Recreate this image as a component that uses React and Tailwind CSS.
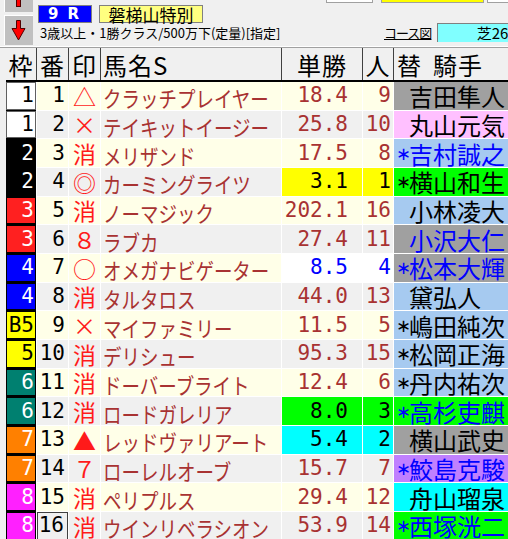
import React from "react";

const ROWBG = ["bg-[#ffffe8]", "bg-[#f0f0f0]"];
const RED = "text-[#a83232]";

const rows = [
  { wk: "1", wc: "bg-white text-black border-[#606060]", no: "1", mk: "△", nm: "クラッチプレイヤー", od: "18.4", pp: "9", ast: false, jk: "吉田隼人", jc: "bg-[#a0a0a0] text-black" },
  { wk: "1", wc: "bg-white text-black border-[#606060]", no: "2", mk: "×", nm: "テイキットイージー", od: "25.8", pp: "10", ast: false, jk: "丸山元気", jc: "bg-[#ffc0ff] text-black" },
  { wk: "2", wc: "bg-black text-white border-black", no: "3", mk: "消", nm: "メリザンド", od: "17.5", pp: "8", ast: true, jk: "吉村誠之", jc: "bg-[#a6caf0] text-[#0000ff]" },
  { wk: "2", wc: "bg-black text-white border-black", no: "4", mk: "◎", nm: "カーミングライツ", od: "3.1", pp: "1", ast: true, jk: "横山和生", jc: "bg-[#00ff00] text-black", oc: "bg-[#ffff00] text-black" },
  { wk: "3", wc: "bg-[#ff2020] text-white border-black", no: "5", mk: "消", nm: "ノーマジック", od: "202.1", pp: "16", ast: false, jk: "小林凌大", jc: "bg-[#a6caf0] text-black" },
  { wk: "3", wc: "bg-[#ff2020] text-white border-black", no: "6", mk: "８", nm: "ラブカ", od: "27.4", pp: "11", ast: false, jk: "小沢大仁", jc: "bg-[#a0a0a0] text-[#0000ff]" },
  { wk: "4", wc: "bg-[#0000ff] text-white border-black", no: "7", mk: "○", nm: "オメガナビゲーター", od: "8.5", pp: "4", ast: true, jk: "松本大輝", jc: "bg-[#a0a0a0] text-[#0000ff]", oc: "text-[#0000ff]" },
  { wk: "4", wc: "bg-[#0000ff] text-white border-black", no: "8", mk: "消", nm: "タルタロス", od: "44.0", pp: "13", ast: false, jk: "黛弘人", jc: "bg-[#a6caf0] text-black" },
  { wk: "B5", wc: "bg-[#ffff00] text-black border-black", no: "9", mk: "×", nm: "マイファミリー", od: "11.5", pp: "5", ast: true, jk: "嶋田純次", jc: "bg-[#a6caf0] text-black" },
  { wk: "5", wc: "bg-[#ffff00] text-black border-black", no: "10", mk: "消", nm: "デリシュー", od: "95.3", pp: "15", ast: true, jk: "松岡正海", jc: "bg-[#a6caf0] text-black" },
  { wk: "6", wc: "bg-[#008070] text-white border-black", no: "11", mk: "消", nm: "ドーバーブライト", od: "12.4", pp: "6", ast: true, jk: "丹内祐次", jc: "bg-[#a6caf0] text-black" },
  { wk: "6", wc: "bg-[#008070] text-white border-black", no: "12", mk: "消", nm: "ロードガレリア", od: "8.0", pp: "3", ast: true, jk: "高杉吏麒", jc: "bg-[#00ff00] text-[#0000ff]", oc: "bg-[#00ff00] text-black" },
  { wk: "7", wc: "bg-[#ff8000] text-white border-black", no: "13", mk: "▲", nm: "レッドヴァリアート", od: "5.4", pp: "2", ast: false, jk: "横山武史", jc: "bg-[#a0a0a0] text-black", oc: "bg-[#00ffff] text-black" },
  { wk: "7", wc: "bg-[#ff8000] text-white border-black", no: "14", mk: "７", nm: "ローレルオーブ", od: "15.7", pp: "7", ast: true, jk: "鮫島克駿", jc: "bg-[#c080ff] text-[#0000ff]" },
  { wk: "8", wc: "bg-[#ff20ff] text-white border-black", no: "15", mk: "消", nm: "ペリプルス", od: "29.4", pp: "12", ast: false, jk: "舟山瑠泉", jc: "bg-[#00ffff] text-black" },
  { wk: "8", wc: "bg-[#ff20ff] text-white border-black", no: "16", mk: "消", nm: "ウインリベラシオン", od: "53.9", pp: "14", ast: true, jk: "西塚洸二", jc: "bg-[#00ff00] text-[#0000ff]", focus: true },
];

const MONO = "font-['DejaVu_Sans_Mono',monospace] text-[21px] leading-none";
const COLS = "grid grid-cols-[30px_31px_31px_180px_80px_30px_130px] gap-x-px";

export default function App() {
  return (
    <div className="w-[508px] h-[539px] overflow-hidden bg-[#f0f0f0] font-['Noto_Sans_CJK_JP',sans-serif] text-black">
      {/* top bar */}
      <div className="flex h-[46px]">
        <div className="ml-[4px] flex w-[29px] shrink-0 flex-col">
          <div className="h-[12px] bg-[#c0c0c0] border-l border-white">
            <svg width="28" height="12" className="block">
              <rect x="11.5" y="-1" width="4" height="7.5" fill="#ff0000" stroke="#500000" strokeWidth="1" />
            </svg>
          </div>
          <div className="mt-[3px] h-[30px] bg-[#c0c0c0] border-l border-t border-white">
            <svg width="28" height="29" className="block">
              <path d="M11.5 4.5 H15.5 V12.5 H20 L13.5 24 L7 12.5 H11.5 Z" fill="#ff0000" stroke="#500000" strokeWidth="1" />
            </svg>
          </div>
        </div>
        <div className="flex w-[600px] shrink-0 flex-col">
          <div className="flex h-[3px]">
            <div className="ml-[293px] w-[47px] shrink-0 border-x border-b border-[#a0a0a0] bg-white" />
            <div className="ml-[8px] w-[103px] shrink-0 border-x border-b border-[#a0a0a0] bg-[#ffff00]" />
            <div className="ml-[3px] w-[40px] shrink-0 border-x border-b border-[#a0a0a0] bg-white" />
          </div>
          <div className="flex">
            <div className="ml-[5px] flex w-[346px] shrink-0 flex-col">
              <div className="mt-[2px] flex gap-[7px]">
                <div className="flex h-[18px] w-[54px] items-center border border-[#808080] bg-[#0000ff] pl-[9px] font-['DejaVu_Sans',sans-serif] text-[15px] font-bold leading-none text-white">
                  <span>9</span>
                  <span className="ml-[9px]">R</span>
                </div>
                <div className="flex h-[18px] w-[104px] items-center justify-center border border-[#808080] bg-[#ffff80] text-[17px] leading-none">
                  磐梯山特別
                </div>
              </div>
              <div className="mt-[2px] ml-[2px] whitespace-nowrap text-[13px] leading-[16px]">
                3歳以上・1勝クラス/500万下(定量)[指定]
              </div>
            </div>
            <div className="mt-[20px] flex shrink-0">
              <div className="h-[19px] w-[48px] shrink-0 text-[13px] leading-[19px] tracking-[-1px] underline decoration-1 underline-offset-[1px]">
                コース図
              </div>
              <div className="ml-[5px] h-[19px] w-[92px] shrink-0 border-l border-t border-[#808080] bg-[#80ffff] pr-[4px] text-right text-[15px] leading-[18px]">
                芝2600
              </div>
            </div>
          </div>
        </div>
      </div>
      <div className="h-px bg-white" />
      <div className="h-px bg-[#a0a0a0]" />

      {/* header */}
      <div className={`ml-[6px] h-[34px] w-max border-b-2 border-black bg-[#404040] ${COLS}`}>
        {[
          ["枠", "justify-center"],
          ["番", "justify-center"],
          ["印", "justify-center"],
          ["馬名S", "justify-start pl-[2px]"],
          ["単勝", "justify-center"],
          ["人", "justify-center"],
        ].map(([t, c]) => (
          <div key={t} className={`flex items-center bg-[#f0f0f0] pt-[2px] text-[24px] leading-none tracking-[1px] ${c}`}>
            {t}
          </div>
        ))}
        <div className="flex items-center bg-[#f0f0f0] pl-[3px] pt-[2px] text-[24px] leading-none tracking-[1px]">
          <span>替</span>
          <span className="ml-[11px]">騎手</span>
        </div>
      </div>

      {/* body */}
      <div className={`ml-[6px] w-max auto-rows-[27.67px] gap-y-px bg-white ${COLS}`}>
        {rows.map((r, i) => {
          const bg = ROWBG[i % 2];
          return (
            <React.Fragment key={i}>
              <div className={`flex items-center justify-end border pr-[1px] shadow-[0_1px_0_#000] ${r.wc} ${MONO}`}>
                {r.wk}
              </div>
              <div className={`flex items-center justify-end pr-[3px] text-black ${bg} ${MONO} ${r.focus ? "border border-[#404040]" : ""}`}>
                {r.no}
              </div>
              <div className={`flex items-center justify-center pt-[1px] text-[23px] leading-none text-[#ff1a1a] ${bg}`}>
                {r.mk}
              </div>
              <div className={`flex items-center overflow-hidden whitespace-nowrap pl-[2px] pt-[3px] ${RED} ${bg}`}>
                <span className="inline-block shrink-0 origin-left scale-x-[0.84] text-[22px] leading-none">{r.nm}</span>
              </div>
              <div className={`flex items-center justify-end pr-[14px] ${MONO} ${r.oc ? r.oc : `${RED} ${bg}`}`}>
                {r.od}
              </div>
              <div className={`flex items-center justify-end pr-[2px] ${MONO} ${r.oc ? r.oc : `${RED} ${bg}`}`}>
                {r.pp}
              </div>
              <div className={`flex items-center whitespace-nowrap pl-[2px] pt-[1px] text-[24px] leading-none ${r.jc}`}>
                <span className="inline-block w-[13px] text-center font-['DejaVu_Sans',sans-serif] text-[18px]">
                  {r.ast ? "∗" : ""}
                </span>
                <span>{r.jk}</span>
              </div>
            </React.Fragment>
          );
        })}
      </div>
    </div>
  );
}
